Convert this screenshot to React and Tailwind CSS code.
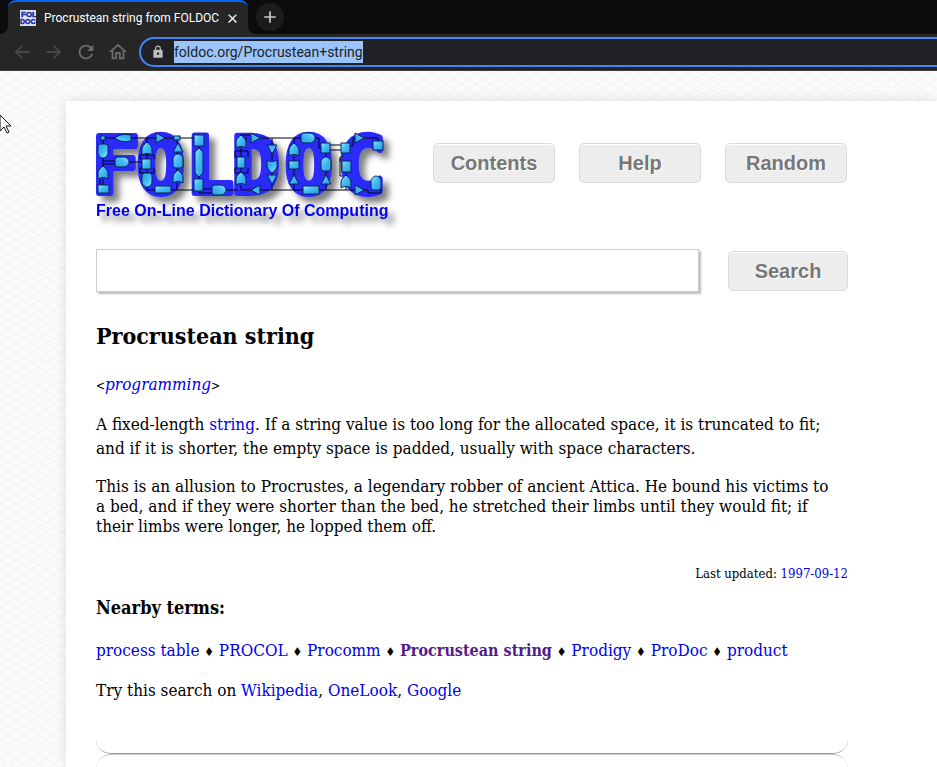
import React from "react";
import { MdAdd, MdArrowBack, MdArrowForward, MdClose, MdLock, MdOutlineHome, MdRefresh } from "react-icons/md";

const WIRES = [
  "M105 137H116M131 137H194M103 139V144M103 156V166M103 160H115M103 163H115M129 161H143M103 178V184M100 178V184",
  "M147 141V137M147 153V158M147 168V174M147 184V189H155M171 189H194M177 139V143M177 151V154M177 166V170M177 182V189",
  "M142 167H140V172H154V167M142 158H140V154H154V158M199 145V148M199 175V179M199 190V192H213M202 188H213M226 189H237",
  "M241 135V134H250M246 136V140M241 147V156M237 156H235V150H248V156M241 167V172M237 167H235V172H248V167M241 184V189H251",
  "M260 137H302M272 137V144M272 151V159M272 171V174M272 182V189M260 189H303M294 137V143M294 155V160M294 168V175M294 182V189",
  "M315 137H319V147H322M319 189H356M326 152V156M326 170V175M326 182V189M330 144H341M330 149H341M350 145H353V137H356",
  "M363 137H378V141M342 152V156H340V161M346 171V175M342 175H340V158H342M346 186V189M363 189H368V192H381V188",
];

const BOXES = [
  [101, 135, 4, 4], [98, 184, 11, 8], [142, 158, 9, 10], [174, 135, 6, 4], [155, 185, 16, 7],
  [194, 134, 10, 11], [194, 178, 9, 12], [237, 156, 8, 11], [289, 160, 10, 8], [303, 185, 16, 8],
  [321, 142, 9, 10], [341, 142, 9, 10], [373, 140, 10, 9], [342, 160, 9, 11],
];

/* Each gate: kind, centre x, centre y, rotation in degrees (0 points up). */
const GATES = [
  ["bullet", 123, 137, -90], ["and", 103, 150, 180], ["and", 122, 161, 90], ["or", 103, 172, 0],
  ["or", 147, 148, 0], ["and", 147, 179, 180], ["tri", 160, 137, 90], ["tri", 178, 147, 0],
  ["and", 178, 160, 0], ["or", 178, 176, 0], ["and", 219, 189, 90], ["or", 241, 141, 0],
  ["or", 241, 178, 0], ["tri", 255, 137, 90], ["tri", 272, 148, 180], ["or", 272, 165, 180],
  ["tri", 272, 178, 180], ["tri", 256, 189, -90], ["and", 308, 137, 90], ["or", 294, 149, 0],
  ["tri", 294, 179, 0], ["and", 326, 163, 0], ["tri", 326, 179, 0], ["tri", 359, 137, 90],
  ["or", 346, 181, 0], ["tri", 359, 189, 90], ["and", 376, 182, 0],
];

const GATE_PATHS = {
  and: "M-5 5V-1C-5 -5 -2 -7 0 -7C2 -7 5 -5 5 -1V5L3 7H-3Z",
  or: "M-5 6V0C-5 -3 -2 -5 0 -7C2 -5 5 -3 5 0V6C2 4 -2 4 -5 6Z",
  tri: "M-5 4L0 -5L5 4Z",
  bullet: "M-3 8C-4 2 -4 -3 0 -8C4 -3 4 2 3 8Z",
};

const LETTERS = [["F", 92], ["O", 137], ["L", 186], ["D", 232], ["O", 285], ["C", 338]];

function Logo() {
  return (
    <svg viewBox="96 130 304 100" className="h-[100px] w-[304px] shrink-0 overflow-visible" role="img" aria-label="FOLDOC">
      <defs>
        <filter id="logo-shadow" x="-5%" y="-10%" width="115%" height="130%">
          <feDropShadow dx="6" dy="6" stdDeviation="3" floodColor="#000" floodOpacity="0.5" />
        </filter>
        <linearGradient id="gate" x1="0" y1="0" x2="1" y2="1">
          <stop offset="0" stopColor="#a4f0ff" />
          <stop offset="0.4" stopColor="#48c0fa" />
          <stop offset="1" stopColor="#2a98dc" />
        </linearGradient>
      </defs>
      <g filter="url(#logo-shadow)">
        <g fill="#2a2afa" stroke="#2a2afa" strokeWidth="6" strokeLinejoin="round" fontFamily="'DejaVu Sans Mono', monospace" fontWeight="700" fontSize="79">
          {LETTERS.map(([letter, x]) => (
            <text key={x} x={x} y="192">{letter}</text>
          ))}
        </g>
        <text x="96" y="215" fill="#0000f0" fontFamily="'Liberation Sans', Arial, sans-serif" fontWeight="700" fontSize="16">
          Free On-Line Dictionary Of Computing
        </text>
      </g>
      <g fill="none" stroke="#02021c" strokeWidth="1">
        {WIRES.map((d) => <path key={d} d={d} />)}
      </g>
      <g fill="url(#gate)" stroke="#03284f" strokeWidth="1">
        {BOXES.map(([x, y, w, h]) => <rect key={`${x}-${y}`} x={x} y={y} width={w} height={h} />)}
        <path d="M195 151L199 147L203 151V172L199 176L195 172Z" />
        {GATES.map(([kind, x, y, turn]) => (
          <path key={`${x}-${y}`} d={GATE_PATHS[kind]} transform={`translate(${x} ${y}) rotate(${turn})`} />
        ))}
      </g>
      <g fill="#fff" stroke="#02021c">
        {[[168, 137], [262, 137], [272, 153], [250, 189], [326, 173], [294, 172], [365, 137], [366, 189]].map(([x, y]) => (
          <circle key={`${x}-${y}`} cx={x} cy={y} r="1" />
        ))}
      </g>
    </svg>
  );
}

function Favicon() {
  return (
    <svg viewBox="0 0 16 16" className="size-4 shrink-0" aria-hidden="true">
      <rect width="16" height="16" fill="#dfe4f6" />
      <g fill="#1c2fa8" stroke="#1c2fa8" strokeWidth="0.5" fontFamily="'Liberation Sans', sans-serif" fontWeight="700">
        <text x="1" y="7" fontSize="8">FOL</text>
        <text x="0" y="14" fontSize="7">DOC</text>
      </g>
    </svg>
  );
}

function BrowserBar() {
  return (
    <header className="h-[71px] border-b border-[#3c3838] bg-[#262626] font-['Roboto',sans-serif]">
      <div className="flex h-[34px] bg-[#0c0c0c]">
        <div className="w-2 bg-[#262626]"><div className="h-full rounded-br-lg bg-[#0c0c0c]" /></div>
        <div className="flex w-60 items-center overflow-hidden rounded-t-lg border-t-2 border-[#0a66f5] bg-[#262626] pl-3 pr-2 text-white">
          <Favicon />
          <span className="ml-2 flex-1 whitespace-nowrap text-xs">Procrustean string from FOLDOC</span>
          <button aria-label="Close tab"><MdClose size={15} /></button>
        </div>
        <div className="w-2 bg-[#262626]"><div className="h-full rounded-bl-lg bg-[#0c0c0c]" /></div>
        <button aria-label="New tab" className="mt-[3px] flex size-7 items-center justify-center rounded-full bg-[#1c1c1c] text-[#c8c8c8]">
          <MdAdd size={20} />
        </button>
      </div>
      <div className="flex h-9 items-center pl-[11px]">
        <nav className="flex shrink-0 items-center gap-2.5">
          <button aria-label="Back" className="text-[#484848]"><MdArrowBack size={22} /></button>
          <button aria-label="Forward" className="text-[#484848]"><MdArrowForward size={22} /></button>
          <button aria-label="Reload" className="text-[#6c6c6c]"><MdRefresh size={22} /></button>
          <button aria-label="Home" className="text-[#6c6c6c]"><MdOutlineHome size={22} /></button>
        </nav>
        <div className="ml-2.5 flex h-[30px] flex-1 items-center rounded-l-full border-2 border-r-0 border-[#4285f4] bg-[#202124] pl-2.5">
          <MdLock size={14} className="shrink-0 text-[#bdbdbd]" />
          <a href="#address" className="ml-[9px] h-[22px] whitespace-nowrap bg-[#9bc4f8] text-sm leading-[22px] text-[#202124]">foldoc.org/Procrustean+string</a>
        </div>
      </div>
    </header>
  );
}

function PushButton({ children, className = "w-[122px]" }) {
  return (
    <button className={`h-10 shrink-0 rounded-[5px] border border-[#dcdcdc] bg-[#ededed] font-['Liberation_Sans',Arial,sans-serif] text-xl font-bold text-[#777] shadow-[inset_0_1px_0_0_#fff] [text-shadow:1px_1px_0_#fff] ${className}`}>
      {children}
    </button>
  );
}

function Link({ children, className = "text-[#0000ee]" }) {
  return <a href="#term" className={className}>{children}</a>;
}

const NEARBY = ["process table", "PROCOL", "Procomm", "Procrustean string", "Prodigy", "ProDoc", "product"];

export default function App() {
  return (
    <div className="flex h-screen flex-col overflow-hidden bg-white">
      <BrowserBar />
      <div className="flex min-h-0 flex-1 bg-[#fbfbfb] bg-[repeating-linear-gradient(32deg,transparent_0_7px,#f4f4f4_7px_8px),repeating-linear-gradient(-32deg,transparent_0_7px,#f4f4f4_7px_8px)] pl-[66px] pt-[30px]">
        <main className="flex flex-1 flex-col bg-white px-[30px] pt-[30px] font-['DejaVu_Serif_Condensed','DejaVu_Serif',serif] text-[17px] text-black shadow-[0_0_12px_rgba(0,0,0,0.12)]">
          <div className="flex w-full max-w-[752px] flex-1 flex-col">
            <div className="flex h-[100px] items-start">
              <Logo />
              <div className="ml-[33px] mt-3 flex gap-6">
                <PushButton>Contents</PushButton>
                <PushButton>Help</PushButton>
                <PushButton>Random</PushButton>
              </div>
            </div>
            <form className="mt-[18px] flex items-center justify-between" onSubmit={(e) => e.preventDefault()}>
              <input aria-label="Search terms" className="h-[43px] w-[603px] border border-[#ccc] bg-white px-2 shadow-[2px_2px_2px_#bbb] outline-none" />
              <PushButton className="w-[120px]">Search</PushButton>
            </form>
            <h1 className="mt-7 text-[23px] font-bold leading-8">Procrustean string</h1>
            <p className="mt-5 leading-6">
              <span className="text-xs">&lt;</span><Link className="italic text-[#0000ee]">programming</Link><span className="text-xs">&gt;</span>
            </p>
            <p className="mt-4 whitespace-nowrap leading-6">
              A fixed-length <Link>string</Link>. If a string value is too long for the allocated space, it is truncated to fit;<br />
              and if it is shorter, the empty space is padded, usually with space characters.
            </p>
            <p className="mt-4 whitespace-nowrap leading-5">
              This is an allusion to Procrustes, a legendary robber of ancient Attica. He bound his victims to<br />
              a bed, and if they were shorter than the bed, he stretched their limbs until they would fit; if<br />
              their limbs were longer, he lopped them off.
            </p>
            <p className="mt-7 text-right text-[13px] leading-5">Last updated: <Link>1997-09-12</Link></p>
            <h2 className="mt-3 text-lg font-bold leading-6">Nearby terms:</h2>
            <p className="mt-5 whitespace-nowrap leading-5">
              {NEARBY.map((term, i) => (
                <React.Fragment key={term}>
                  {i > 0 && <> <span className="text-xs leading-none">♦</span> </>}
                  <Link className={term === "Procrustean string" ? "text-base font-bold leading-none text-[#551a8b]" : "text-[#0000ee]"}>{term}</Link>
                </React.Fragment>
              ))}
            </p>
            <p className="mt-5 leading-5">
              Try this search on <Link>Wikipedia</Link>, <Link>OneLook</Link>, <Link>Google</Link>
            </p>
            <div className="mt-5 h-[34px] shrink-0 rounded-b-[15px] border-b border-[#999]" />
            <div className="min-h-4 flex-1 rounded-t-[15px] border-t border-[#ccc]" />
          </div>
        </main>
      </div>
      <svg viewBox="0 0 12 20" className="absolute left-0 top-[114px] h-5 w-3" aria-hidden="true">
        <path d="M0 1L11 12H6L9 18L7 19L4 13L0 17Z" fill="#fff" stroke="#111" />
      </svg>
    </div>
  );
}
